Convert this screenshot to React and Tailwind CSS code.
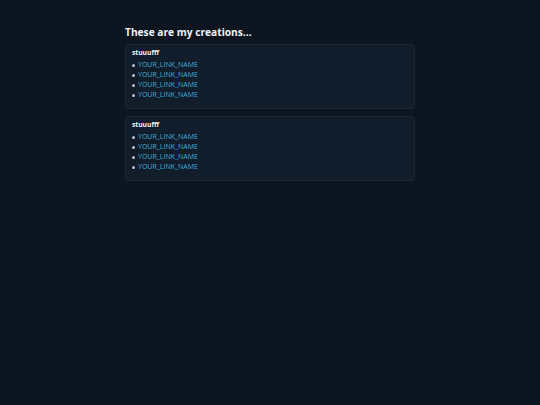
const groups = [
  { title: "stuuufff", links: ["YOUR_LINK_NAME", "YOUR_LINK_NAME", "YOUR_LINK_NAME", "YOUR_LINK_NAME"] },
  { title: "stuuufff", links: ["YOUR_LINK_NAME", "YOUR_LINK_NAME", "YOUR_LINK_NAME", "YOUR_LINK_NAME"] },
];

const App = () => {
  return (
    <div
      className="min-h-[405px] w-full bg-[#0d1520] text-white"
      style={{ fontFamily: '"Open Sans", "Noto Sans", sans-serif' }}
    >
      <div className="mx-auto w-[290px] pt-[25px]">
        <h1 className="mb-[5px] text-[10.2px] font-bold leading-[14px] text-[#eef2f6]">
          These are my creations...
        </h1>
        {groups.map((g, i) => (
          <div
            key={i}
            className="mb-[7px] rounded-[3px] border border-[#1a2634] bg-[#111d2a] px-[6px] pt-[4px] pb-[7.6px]"
          >
            <div className="text-[6.7px] font-bold leading-[8px] text-[#f2f4f7]">{g.title}</div>
            <ul className="mt-[3px] text-[7px] leading-[10.1px]">
              {g.links.map((l, j) => (
                <li key={j} className="flex items-center">
                  <span className="mr-[3px] h-[3px] w-[3px] rounded-full bg-[#b9c2cc]" />
                  <a href="#" className="text-[#42acdb]">
                    {l}
                  </a>
                </li>
              ))}
            </ul>
          </div>
        ))}
      </div>
    </div>
  );
};

export default App;
